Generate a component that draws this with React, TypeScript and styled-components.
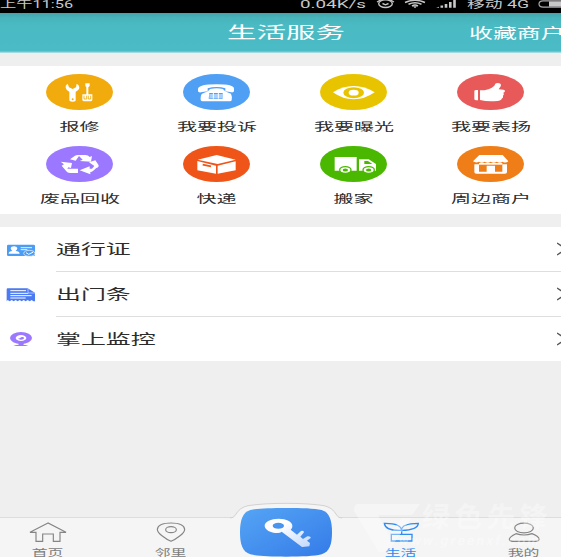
import React from 'react';
import styled, { createGlobalStyle } from 'styled-components';

const Global = createGlobalStyle`
  * { box-sizing: border-box; }
  html, body { margin: 0; padding: 0; overflow: hidden; }
  body { font-family: Roboto, "Noto Sans CJK SC", sans-serif; background: #efefef; }
  svg { display: block; flex: none; }
`;

const Screen = styled.div`
  width: 561px;
  height: 557px;
  display: flex;
  flex-direction: column;
  overflow: hidden;
  background: #efefef;
`;

/* Text drawn wider than tall; the origin keeps its left edge or centre in place. */
const Wide = styled.span<{ $size: number; $stretch: number; $color: string; $origin?: string }>`
  display: inline-block;
  flex: none;
  white-space: nowrap;
  font-size: ${p => p.$size}px;
  line-height: 16px;
  color: ${p => p.$color};
  transform: scaleX(${p => p.$stretch});
  transform-origin: ${p => p.$origin ?? 'center'} center;
`;

const StatusBar = styled.div`
  display: flex;
  height: 13px;
  flex: none;
  background: #000;
  overflow: hidden;
`;
const Slot = styled.div<{ $width: number; $icon?: boolean }>`
  width: ${p => p.$width}px;
  flex: none;
  margin-top: ${p => (p.$icon ? -5 : -7)}px;
  height: 18px;
`;

const Header = styled.header`
  display: grid;
  grid-template-columns: 1fr 118px 1fr;
  align-items: center;
  height: 40px;
  flex: none;
  margin-bottom: 13px;
  padding-left: 11px;
  background: linear-gradient(#44a3a9 0, #48b4bb 5px, #4abac3 12px, #4abcc6 38px, #8dd3d9 39px, #b9e2e5 40px);
`;
const Title = styled.div`
  grid-column: 2;
  display: flex;
  justify-content: center;
`;
const Action = styled.div`
  display: flex;
  padding: 0 0 1px 124px;
`;

const Services = styled.section`
  display: grid;
  grid-template-columns: repeat(4, 137px);
  grid-auto-rows: 72px;
  height: 148px;
  flex: none;
  padding: 8px 0 0 11px;
  background: #fff;
`;
const Service = styled.div`
  display: flex;
  flex-direction: column;
  align-items: center;
  gap: 8.5px;
`;

const List = styled.section`
  margin-top: 13px;
  height: 134px;
  flex: none;
  background: #fff;
`;
const Row = styled.div<{ $last?: boolean }>`
  display: flex;
  height: ${p => (p.$last ? 44 : 45)}px;
`;
const RowIcon = styled.div`
  width: 56px;
  padding: 0 0 0 6px;
  display: flex;
  align-items: center;
`;
const RowBody = styled.div<{ $last?: boolean }>`
  flex: 1;
  display: flex;
  align-items: center;
  justify-content: space-between;
  border-bottom: ${p => (p.$last ? 'none' : '1px solid #dedede')};
`;

const TabBar = styled.nav`
  position: relative;
  margin-top: auto;
  height: 40px;
  flex: none;
  display: flex;
  background: #f5f5f5;
  border-top: 1px solid #dcdcdc;
`;
const Tab = styled.div<{ $width: number; $shift?: number }>`
  width: ${p => p.$width}px;
  padding-left: ${p => p.$shift ?? 0}px;
  flex: none;
  display: flex;
  flex-direction: column;
  align-items: center;
  padding-top: 4px;
  gap: 1.5px;
`;
const KeyButton = styled.div`
  position: absolute;
  left: 230px;
  bottom: 0;
`;
const Watermark = styled.div`
  position: absolute;
  left: 350px;
  bottom: 0;
  width: 211px;
  height: 58px;
  pointer-events: none;
`;
const MarkText = styled.div<{ $top: number; $left: number; $size: number; $gap: number; $skew: number }>`
  position: absolute;
  top: ${p => p.$top}px;
  left: ${p => p.$left}px;
  font-size: ${p => p.$size}px;
  line-height: 1;
  font-weight: 700;
  letter-spacing: ${p => p.$gap}px;
  transform: skewX(${p => p.$skew}deg);
  white-space: nowrap;
  color: rgba(255, 255, 255, 0.36);
`;

const Disc = ({ x, color, row, children }: { x: number; color: string; row: number; children: React.ReactNode }) => {
  const y = row === 0 ? 42 : 258;
  return (
    <svg width="67" height="36" viewBox={`${x} ${y} 201 108`}>
      <ellipse cx={x + 100.5} cy={y + 54} rx="100.5" ry="54" fill={color} />
      {children}
    </svg>
  );
};

const services = [
  {
    label: '报修', icon: (
      <Disc x={78} row={0} color="#f2ab0c">
        <g fill="#fff">
          <path d="M143 71q-8 5-6 12 2 9 11 12v25q0 5 10 5t9-5V95q11-4 11-13 0-7-8-11l-2 11-10 5-11-5z" />
          <path d="M196 70h13v8l-4 4v21h12v16q0 5-6 5h-18q-6 0-6-5v-16h12V82l-3-4z" />
        </g>
        <path d="M192 107v10h8v-10m5 0v10h7v-10" stroke="#f2ab0c" strokeWidth="2.5" fill="none" />
        <circle cx="158" cy="118" r="3" fill="#f2ab0c" />
      </Disc>
    ),
  },
  {
    label: '我要投诉', icon: (
      <Disc x={99} row={0} color="#4f9ff5">
        <path d="M144 94v-8q4-13 56-13t52 13v8q-2 4-8 3l-18-3v-9q-12-4-26-4t-27 4v9l-20 3q-8 1-9-3z" fill="#fff" />
        <path d="M180 87q20-4 39 0 3 7 24 14 4 8 2 20-1 3-5 3h-82q-5 0-6-4-1-14 4-19 20-6 24-14z" fill="#fff" />
        <path d="M178 99h40v17h-42z" fill="#4f9ff5" />
        <path d="M178 105h40m-40 6h40M190 98v18m15-18v18" stroke="#fff" strokeWidth="3" />
      </Disc>
    ),
  },
  {
    label: '我要曝光', icon: (
      <Disc x={90} row={0} color="#e8c400">
        <path d="M129 97q30-19 62-19t63 19q-30 21-63 21t-62-21z" fill="#fff" />
        <ellipse cx="191" cy="98" rx="31" ry="16.5" fill="#e8c400" />
        <ellipse cx="191" cy="98" rx="15" ry="8.5" fill="#fff" />
      </Disc>
    ),
  },
  {
    label: '我要表扬', icon: (
      <Disc x={83} row={0} color="#e85a5a">
        <path d="M141 90h5v31h-4q-7 0-7-4V93q0-3 6-3zM152 91q29 0 43-14l3-6q4-3 12-1 7 3 4 9l-6 9q19 0 19 5 0 4-5 5 4 5-1 9 2 6-4 9-2 6-13 7-29 3-52-3z" fill="#fff" />
      </Disc>
    ),
  },
  {
    label: '废品回收', icon: (
      <Disc x={78} row={1} color="#9b78ff">
        <g fill="#fff">
          <path d="M150 298l15-11q3-2 9-2h22q9 0 13 6l7-3-3 17-34-2 9-4-11-11-10 14z" />
          <path d="M207 307l19-6 9 13q4 6-6 10l-10 9q-3 3-8 3v7l-32-12 30-12v7h7l7-8z" />
          <path d="M122 305l34 4-3 15-8-2-3 4h32v13h-24q-8 0-11-5l-14-17 7-4z" />
        </g>
      </Disc>
    ),
  },
  {
    label: '快递', icon: (
      <Disc x={99} row={1} color="#ef5518">
        <path d="M143 299l57-14 57 14-54 13zM142 303l56 14v24l-56-10zM203 317l54-13v27l-54 10z" fill="#fff" />
        <path d="M158 314l25 5" stroke="#ef5518" strokeWidth="5" />
      </Disc>
    ),
  },
  {
    label: '搬家', icon: (
      <Disc x={90} row={1} color="#4ab800">
        <path d="M134 291h66v41h-66zM207 298h29l22 14v20h-51z" fill="#fff" />
        <path d="M223 303h11l13 9h-24z" fill="#4ab800" />
        <g fill="#fff" stroke="#4ab800" strokeWidth="4">
          <ellipse cx="166" cy="330" rx="17" ry="10" />
          <ellipse cx="236" cy="330" rx="17" ry="10" />
        </g>
        <g fill="#4ab800">
          <ellipse cx="166" cy="330" rx="8" ry="4.5" />
          <ellipse cx="236" cy="330" rx="8" ry="4.5" />
        </g>
      </Disc>
    ),
  },
  {
    label: '周边商户', icon: (
      <Disc x={83} row={1} color="#ef7e18">
        <path d="M150 285h70l17 19q-8 7-17 1-9 6-18 0-9 6-18 0-9 6-18 0-9 6-17 0-9 5-18-1z" fill="#fff" />
        <path d="M135 313h14v22h23v-18h25v18h22v-22h14v23q0 5-6 5h-86q-6 0-6-5z" fill="#fff" />
        <path d="M149 309h70v5h-70z" fill="#fff" />
      </Disc>
    ),
  },
];

const rows = [
  {
    label: '通行证', icon: (
      <svg width="30" height="14" viewBox="18 66 90 42">
        <rect x="21" y="71" width="84" height="34" rx="4" fill="#4a9cf5" />
        <path d="M26 98q0-7 11-8-5-4-5-9 1-5 10-5t10 5q0 5-5 9 11 1 12 8z" fill="#fff" />
        <path d="M62 80h34M62 86h20" stroke="#e6f2ff" strokeWidth="3" />
        <ellipse cx="88" cy="97" rx="17" ry="9" fill="#4a9cf5" stroke="#fff" strokeWidth="2" />
        <path d="M78 95l8 5 14-7" stroke="#fff" strokeWidth="3" fill="none" />
      </svg>
    ),
  },
  {
    label: '出门条', icon: (
      <svg width="30" height="16" viewBox="18 200 90 48">
        <path d="M24 204h59l22 13v26h-5l-5-4-6 4-6-4-6 4-6-4-6 4-6-4-6 4-6-4-6 4-6-4-6 4-6-4-3 4v-36q0-3 3-3z" fill="#4b7af2" />
        <path d="M31 211h47M31 219h54M31 226h64M31 233h46" stroke="#fff" strokeWidth="3" />
        <path d="M84 205v10q0 3 4 3h17" stroke="#d8e3ff" strokeWidth="2" fill="none" />
      </svg>
    ),
  },
  {
    label: '掌上监控', icon: (
      <svg width="30" height="16" viewBox="18 333 90 48">
        <ellipse cx="63" cy="354" rx="33" ry="18" fill="#9b78ff" />
        <path d="M55 369h17l-2 5q10 1 15 4H40q5-3 16-4z" fill="#9b78ff" />
        <ellipse cx="63" cy="354" rx="16" ry="9" fill="#fff" />
        <path d="M54 354q5 3 9-2 6-3 10 2-2 5-10 5-7 0-9-5z" fill="#9b78ff" />
      </svg>
    ),
  },
];

const TabLabel = ({ text, active }: { text: string; active?: boolean }) => (
  <Wide $size={9.5} $stretch={1.67} $color={active ? '#2e8cf2' : '#7d7d7d'}>{text}</Wide>
);

export default function App() {
  return (
    <>
      <Global />
      <Screen>
        <StatusBar>
          <Slot $width={300}><Wide $size={11} $stretch={1.48} $color="#c8c8c8" $origin="left">上午11:56</Wide></Slot>
          <Slot $width={76}><Wide $size={11} $stretch={1.71} $color="#c8c8c8" $origin="left">0.04K/s</Wide></Slot>
          <Slot $width={28} $icon>
            <svg width="19" height="14" viewBox="0 -5 19 14" fill="none" stroke="#c4c4c4" strokeWidth="1.4">
              <ellipse cx="9.5" cy="3.7" rx="6.8" ry="3.8" />
              <path d="M6.5 3.5l3 1.3 3-1.3M1 2l4-2.2M14-.2L18 2" />
            </svg>
          </Slot>
          <Slot $width={32} $icon>
            <svg width="22" height="14" viewBox="0 -5 22 14" fill="none" stroke="#c8c8c8" strokeWidth="1.5">
              <path d="M1 2.5q10-4.5 20 0M4.5 4.2q6.5-3 13 0M8 6q3-1.8 6 0" />
              <path d="M9 6.2h4l-2 2z" fill="#c8c8c8" stroke="none" />
            </svg>
          </Slot>
          <Slot $width={31} $icon>
            <svg width="21" height="14" viewBox="0 -5 21 14" fill="#c8c8c8">
              <path d="M0 7.7l3-1v1zM4.5 5.5h2.6v2.2H4.5zM8.7 4h2.6v3.7H8.7zM13 2h2.6v5.7H13zM17.2 0h2.6v7.7h-2.6z" />
            </svg>
          </Slot>
          <Slot $width={71}><Wide $size={10.6} $stretch={1.68} $color="#c8c8c8" $origin="left">移动 4G</Wide></Slot>
          <Slot $width={23} $icon>
            <svg width="23" height="14" viewBox="0 -5 23 14">
              <path d="M24 .8H5Q1 1 1 4t4 3.2h19" fill="none" stroke="#a8a8a8" strokeWidth="1.2" />
              <path d="M11 1.4h13v5.2H11z" fill="#c8c8c8" />
            </svg>
          </Slot>
        </StatusBar>

        <Header>
          <Title><Wide $size={16} $stretch={1.84} $color="#fff">生活服务</Wide></Title>
          <Action><Wide $size={13.5} $stretch={1.77} $color="#fff" $origin="left">收藏商户</Wide></Action>
        </Header>

        <Services>
          {services.map(s => (
            <Service key={s.label}>
              {s.icon}
              <Wide $size={11.5} $stretch={1.74} $color="#2c2c2c">{s.label}</Wide>
            </Service>
          ))}
        </Services>

        <List>
          {rows.map((r, i) => (
            <Row key={r.label} $last={i === rows.length - 1}>
              <RowIcon>{r.icon}</RowIcon>
              <RowBody $last={i === rows.length - 1}>
                <Wide $size={14} $stretch={1.78} $color="#2c2c2c" $origin="left">{r.label}</Wide>
                <svg width="4" height="14" viewBox="0 0 4 14">
                  <path d="M0 1l9 6-9 6" fill="none" stroke="#555" strokeWidth="1.4" />
                </svg>
              </RowBody>
            </Row>
          ))}
        </List>

        <TabBar>
          <Tab $width={95}>
            <svg width="38" height="21" viewBox="86 97 114 63" fill="none" stroke="#858585" strokeWidth="3.5">
              <path d="M143 100l-54 28h18v27h20v-22h32v22h20v-27h18z" />
            </svg>
            <TabLabel text="首页" />
          </Tab>
          <Tab $width={152}>
            <svg width="30" height="21" viewBox="468 97 90 63" fill="none" stroke="#858585" strokeWidth="3.5">
              <path d="M513 155q-12-5-26-16-15-10-15-20 2-19 41-19t41 19q0 10-15 20-14 11-26 16z" />
              <ellipse cx="513" cy="120" rx="16" ry="9" />
            </svg>
            <TabLabel text="邻里" />
          </Tab>
          <Tab $width={77} />
          <Tab $width={154}>
            <svg width="37" height="21" viewBox="127 97 111 63" fill="none" stroke="#2e8cf2" strokeWidth="4">
              <path d="M152 134h62v20h-62zM183 133v-12M183 122q-49 2-52-21 49-1 52 21zM183 122q-2-20 50-21-2 20-50 21z" />
            </svg>
            <TabLabel text="生活" active />
          </Tab>
          <Tab $width={83} $shift={9}>
            <svg width="34" height="21" viewBox="503 97 102 63" fill="none" stroke="#858585" strokeWidth="3.5">
              <ellipse cx="554" cy="115" rx="28" ry="14.5" />
              <path d="M530 132q-20 9-20 17 0 6 10 6h69q9 0 10-6 0-9-21-17-24 8-48 0z" />
            </svg>
            <TabLabel text="我的" />
          </Tab>
          <KeyButton>
            <svg width="112" height="55" viewBox="60 36 336 165">
              <defs>
                <linearGradient id="keyFill" x1="0" y1="0" x2="1" y2="1">
                  <stop offset="0" stopColor="#55a5f5" />
                  <stop offset="1" stopColor="#347be8" />
                </linearGradient>
                <linearGradient id="keyMetal" x1="0" y1="0" x2="1" y2="1">
                  <stop offset="0.3" stopColor="#fff" />
                  <stop offset="1" stopColor="#c2d7fb" />
                </linearGradient>
              </defs>
              <path d="M60 86q11 0 16-10 13-24 38-29 45-7 114-7t114 7q25 5 38 29 5 10 16 10v115H60z" fill="#f5f5f5" />
              <path d="M60 84q11 0 16-9 13-23 38-28 45-7 114-7t114 7q25 5 38 28 5 9 16 9" fill="none" stroke="#d2d2d2" strokeWidth="3" />
              <path d="M228 54c48 0 84 1 107 6 24 7 31 32 31 67s-7 59-31 66c-23 6-59 7-107 7s-84-1-107-7c-24-7-31-31-31-66s7-60 31-67c23-5 59-6 107-6z" fill="url(#keyFill)" />
              <path fillRule="evenodd" d="M206 86c23 0 41 9 41 21 0 5-1 8-5 12l19 15 12-11q9-3 9 4l-11 13 8 7 13-8q11-1 10 5l-11 8 9 7-2 10-22 2-61-46q-4 4-12 4c-22 0-39-10-39-22s19-21 42-21zm-1 12c-10 0-17 4-17 9s7 9 17 9 17-4 17-9-7-9-17-9z" fill="url(#keyMetal)" />
            </svg>
          </KeyButton>
          <Watermark>
            <svg width="86" height="58" viewBox="0 0 86 58">
              <path d="M7 5h63l-8 11H28l11 21L52 19h9L38 53H29L4 12Q4 6 7 5z" fill="rgba(255,255,255,.36)" />
            </svg>
            <MarkText $top={5} $left={72} $size={28} $gap={4.5} $skew={-4}>绿色先锋</MarkText>
            <MarkText $top={35} $left={49} $size={13.5} $gap={2.2} $skew={-12}>www.greenxf.com</MarkText>
          </Watermark>
        </TabBar>
      </Screen>
    </>
  );
}
